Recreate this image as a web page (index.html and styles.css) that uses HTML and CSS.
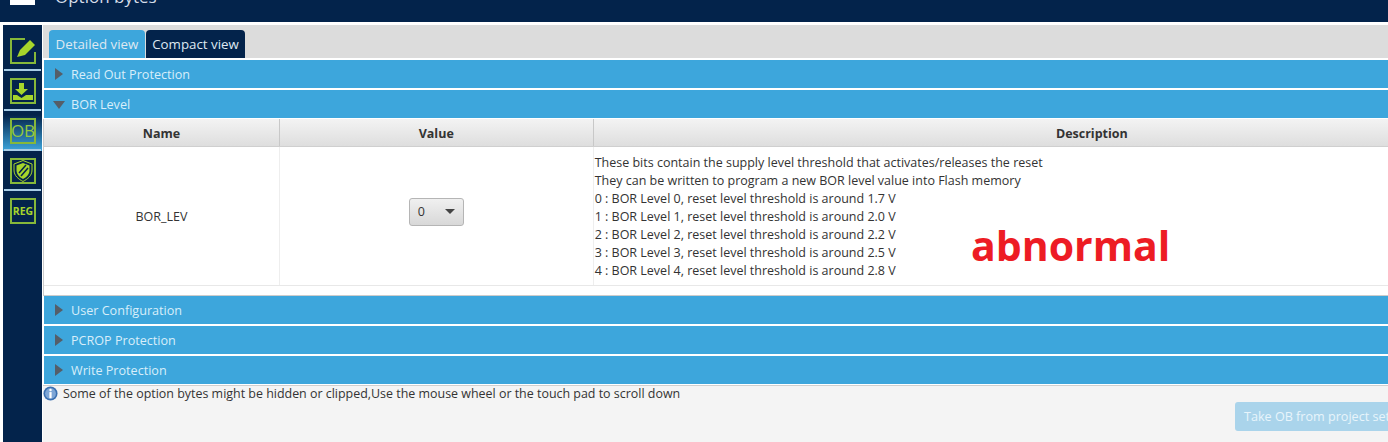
FILE: index.html
```html
<!DOCTYPE html>
<html lang="en">
<head>
<meta charset="utf-8">
<title>Option bytes</title>
<link rel="stylesheet" href="styles.css">
</head>
<body>
<header class="topbar">
  <span class="logo"></span>
  <span class="title">Option bytes</span>
</header>
<div class="app">
  <nav class="sidebar">
    <div class="nav-item first">
      <svg class="icon" viewBox="0 0 26 26"><path class="ln" d="M15 1H1v24h24V14"/><path class="fl" d="M7 19l3-7L20 2l5 5-10 10z"/></svg>
    </div>
    <div class="nav-item">
      <svg class="icon" viewBox="0 0 26 26"><rect class="ln" x="1" y="1" width="24" height="24"/><path class="fl" d="M9 5h5v6h4l-6.500 6L5 11h4z"/><path class="fl" d="M3 17h4l4.500 3 4.500-3h7v5H3z"/></svg>
    </div>
    <div class="nav-item active">
      <svg class="icon" viewBox="0 0 26 26"><rect class="ln" x="1" y="1" width="24" height="24"/><text class="ob" x="13" y="19" text-anchor="middle">OB</text></svg>
    </div>
    <div class="nav-item">
      <svg class="icon" viewBox="0 0 26 26"><rect class="ln" x="1" y="1" width="24" height="24"/><path class="shield" d="M13 2.500l9 3.500v6c0 6-4.500 9-9 11.500C8.500 21 4 18 4 12V6z"/><path class="fl" d="M13 5l6.500 2.500V12c0 4.500-3 7-6.500 9-3.500-2-6.500-4.500-6.500-9V7.500z"/><path class="cut" d="M9 15l7-8M11 18l7-8"/></svg>
    </div>
    <div class="nav-item last">
      <svg class="icon" viewBox="0 0 26 26"><rect class="ln" x="1" y="1" width="24" height="24"/><text class="reg" x="13" y="17" text-anchor="middle">REG</text></svg>
    </div>
  </nav>
  <main class="content">
    <div class="tabs">
      <button class="tab on">Detailed view</button>
      <button class="tab">Compact view</button>
    </div>
    <div class="panels">
      <div class="bar"><span class="arrow"></span>Read Out Protection</div>
      <div class="bar"><span class="arrow down"></span>BOR Level</div>
      <div class="table-wrap">
        <div class="thead">
          <div class="th name">Name</div>
          <div class="th value">Value</div>
          <div class="th desc">Description</div>
        </div>
        <div class="trow">
          <div class="td name">BOR_LEV</div>
          <div class="td value">
            <div class="select"><span>0</span><span class="caret"></span></div>
          </div>
          <div class="td desc">
            <p>These bits contain the supply level threshold that activates/releases the reset</p>
            <p>They can be written to program a new BOR level value into Flash memory</p>
            <p>0 : BOR Level 0, reset level threshold is around 1.7 V</p>
            <p>1 : BOR Level 1, reset level threshold is around 2.0 V</p>
            <p>2 : BOR Level 2, reset level threshold is around 2.2 V</p>
            <p>3 : BOR Level 3, reset level threshold is around 2.5 V</p>
            <p>4 : BOR Level 4, reset level threshold is around 2.8 V</p>
          </div>
        </div>
      </div>
      <div class="bar"><span class="arrow"></span>User Configuration</div>
      <div class="bar"><span class="arrow"></span>PCROP Protection</div>
      <div class="bar"><span class="arrow"></span>Write Protection</div>
    </div>
    <div class="footer">
      <div class="notice">
        <svg class="info" viewBox="0 0 16 16"><circle cx="8" cy="8" r="7.500" fill="#3a6fb0"/><circle cx="8" cy="8" r="5.800" fill="#7ea6d6"/><circle cx="8" cy="4.300" r="1.300" fill="#fff"/><path d="M6.800 6.500h2.400v6.500H6.800z" fill="#fff"/></svg>
        <span>Some of the option bytes might be hidden or clipped,Use the mouse wheel or the touch pad to scroll down</span>
      </div>
      <div class="actions"><button class="take">Take OB from project settings</button></div>
    </div>
  </main>
</div>
<div class="stamp">abnormal</div>
</body>
</html>
```

FILE: styles.css
```css
* { box-sizing: border-box; }
html, body { margin: 0; padding: 0; height: 442px; overflow: hidden; }
body { background: #fff; font-family: "Open Sans", "Noto Sans", sans-serif; font-size: 12.500px; color: #333; width: 1388px; position: relative; }

.topbar { height: 22px; background: #03234b; display: flex; overflow: hidden; align-items: flex-start; padding-left: 10px; }
.logo { width: 25px; height: 5px; background: #fff; }
.title { color: #d5dde8; font-size: 17px; line-height: 20px; margin-top: -13px; margin-left: 20px; }

.app { display: flex; margin-top: 3px; height: 417px; padding-left: 3px; }
.sidebar { width: 39px; flex: none; background: #03234b; display: flex; flex-direction: column; }
.nav-item { height: 40px; padding-top: 7px; padding-left: 7px; flex: none; position: relative; }
.nav-item.first { height: 46px; padding-top: 13px; }
.nav-item::after { content: ""; position: absolute; left: 1px; right: 1px; bottom: 0; height: 2px; background: #a9cde6; }
.nav-item.active { background: linear-gradient(#03234b 10%, #3ea6dc); }
.nav-item.last::after { display: none; }
.icon { width: 26px; height: 26px; display: block; }
.ln { fill: none; stroke: #86b83a; stroke-width: 2; }
.fl { fill: #a6d52b; }
.shield { fill: #03234b; stroke: #a6d52b; stroke-width: 1; }
.cut { fill: none; stroke: #03234b; stroke-width: 1.500; }
.ob { fill: #93c83d; font-size: 17px; font-family: "Open Sans", sans-serif; }
.reg { fill: #a6d52b; font-size: 10.500px; font-weight: 700; font-family: "Open Sans", sans-serif; }

.content { flex: 1; min-width: 0; margin-left: 1px; display: flex; flex-direction: column; background: #f4f4f4; overflow: hidden; }
.tabs { height: 33px; background: #dcdcdc; padding: 5px 0 0 6px; display: flex; gap: 1px; flex: none; }
.tab { height: 28px; border: 0; border-radius: 4px 4px 0 0; background: #03234b; color: #dfe8f1; font: 13.300px "Open Sans", sans-serif; padding: 0; width: 99px; white-space: nowrap; }
.tab.on { background: #3da6dc; width: 96px; }

.panels { background: #fff; padding: 2px 0 0 1px; flex: none; }
.bar { height: 28px; background: #3da6dc; color: #d8eefa; font-size: 12.600px; line-height: 28px; margin-bottom: 2px; display: flex; align-items: center; padding: 1px 0 0 11px; }
.arrow { width: 0; height: 0; border-left: 8px solid #555e68; border-top: 6px solid transparent; border-bottom: 6px solid transparent; margin: -1px 8px 0 0; }
.arrow.down { border-left: 6px solid transparent; border-right: 6px solid transparent; border-top: 8px solid #555e68; border-bottom: 0; margin: 0 6px 0 -2px; }

.table-wrap { height: 177px; margin: -1px 0 0 -1px; border-left: 1px solid #ccc; border-bottom: 1px solid #ccc; width: 1548px; }
.thead { display: flex; height: 28px; background: linear-gradient(#f3f3f3, #dedede); border-bottom: 1px solid #cfcfcf; }
.th { font-weight: 700; font-size: 12.500px; color: #333; text-align: center; line-height: 29px; border-right: 1px solid #c8c8c8; }
.name { width: 236px; }
.value { width: 314px; }
.desc { width: 998px; }
.trow { display: flex; height: 139px; border-bottom: 1px solid #e8e8e8; }
.td { border-right: 1px solid #eee; }
.td.name, .td.value { display: flex; align-items: center; justify-content: center; }
.td.desc { padding: 7px 0 0 1px; border-right: 0; }
.td.desc p { margin: 0; line-height: 18px; }
.select { width: 55px; height: 28px; margin-bottom: 9px; background: linear-gradient(#f0f0f0, #d8d8d8); border: 1px solid #b5b5b5; border-radius: 3px; display: flex; align-items: center; justify-content: space-between; padding: 0 8px; }
.caret { width: 0; height: 0; border-left: 5px solid transparent; border-right: 5px solid transparent; border-top: 5px solid #444; }

.footer { flex: 1; border-top: 1px solid #cfcfcf; margin-top: -1px; background: #f4f4f4; }
.notice { height: 16px; display: flex; align-items: center; gap: 5px; padding-bottom: 1px; color: #333; font-size: 12.450px; }
.info { width: 15px; height: 15px; flex: none; }
.actions { display: flex; padding: 0 0 0 1192px; }
.take { width: 200px; height: 29px; flex: none; border: 0; border-radius: 3px; background: #aad4eb; color: #e8f4fb; font: 12.600px "Open Sans", sans-serif; text-align: left; padding: 0 0 0 9px; white-space: nowrap; }

.stamp { position: absolute; left: 971px; top: 217px; color: #ed1c24; font-size: 41px; font-weight: 700; line-height: 56px; font-family: "Open Sans", sans-serif; }
```
